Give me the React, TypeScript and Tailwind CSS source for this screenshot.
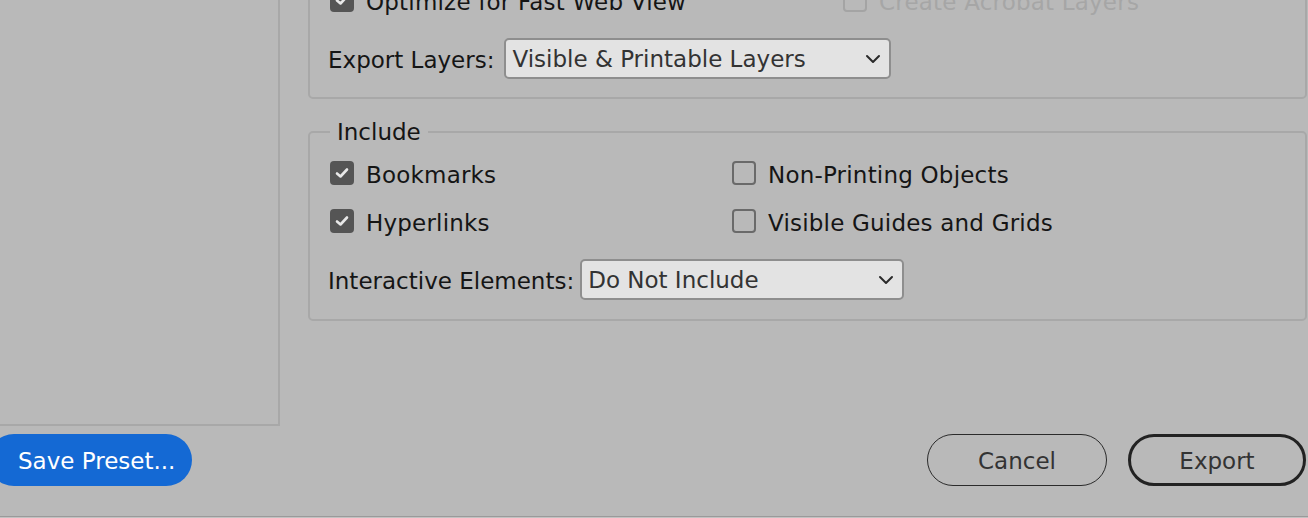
import React from "react";

const font = { fontFamily: '"DejaVu Sans", "Noto Sans", sans-serif' };

function Check({ checked, disabled }: { checked?: boolean; disabled?: boolean }) {
  if (checked) {
    return (
      <span className="flex h-[24px] w-[24px] shrink-0 items-center justify-center rounded-[4px] bg-[#555555]">
        <svg width="14" height="12" viewBox="0 0 14 12" fill="none">
          <path d="M2 6.5 L5.5 9.5 L12 2.5" stroke="#e8e8e8" strokeWidth="2.6" strokeLinecap="round" strokeLinejoin="round" />
        </svg>
      </span>
    );
  }
  return (
    <span
      className={
        "h-[24px] w-[24px] shrink-0 rounded-[4px] border-2 " +
        (disabled ? "border-[#a4a4a4]" : "border-[#6a6a6a]")
      }
    />
  );
}

function CheckRow({ label, checked, disabled }: { label: string; checked?: boolean; disabled?: boolean }) {
  return (
    <div className="flex h-[24px] items-center gap-[12px]">
      <Check checked={checked} disabled={disabled} />
      <span
        className={
          "translate-y-[2px] whitespace-nowrap leading-none tracking-[0.2px] " +
          (disabled ? "text-[#a6a6a6]" : "text-[#151515]")
        }
      >
        {label}
      </span>
    </div>
  );
}

function Select({ value, width }: { value: string; width: string }) {
  return (
    <div
      className={
        "flex h-[41px] items-center justify-between rounded-[5px] border-2 border-[#8e8e8e] bg-[#e3e3e3] pl-[6px] pr-[8px] " +
        width
      }
    >
      <span className="translate-y-[1px] whitespace-nowrap text-[#333333] leading-none">{value}</span>
      <svg width="16" height="10" viewBox="0 0 16 10" fill="none">
        <path d="M2 2 L8 8 L14 2" stroke="#2a2a2a" strokeWidth="2" strokeLinecap="round" strokeLinejoin="round" />
      </svg>
    </div>
  );
}

export default function App() {
  return (
    <div className="relative h-[518px] w-[1308px] overflow-hidden bg-[#b9b9b9] text-[23px]" style={font}>
      <div className="flex">
        <div className="h-[426px] w-[280px] shrink-0 border-b-2 border-r-2 border-[#a8a8a8]" />
        <div className="ml-[28px] w-[999px] shrink-0">
          <div className="-mt-[30px] rounded-[5px] border-2 border-[#a8a8a8] pb-[18px] pl-[20px] pt-[16px]">
            <div className="flex">
              <div className="w-[513px]">
                <CheckRow label="Optimize for Fast Web View" checked />
              </div>
              <CheckRow label="Create Acrobat Layers" disabled />
            </div>
            <div className="mt-[26px] flex items-center gap-[10px]">
              <span className="-ml-[2px] translate-y-[2px] whitespace-nowrap text-[#151515]">Export Layers:</span>
              <Select value="Visible & Printable Layers" width="w-[387px]" />
            </div>
          </div>

          <fieldset className="mt-[20px] rounded-[5px] border-2 border-[#a8a8a8] pb-[19px] pl-[20px] pt-[16px]">
            <legend className="px-[7px] leading-[26px] text-[#151515]">Include</legend>
            <div className="flex flex-col gap-[24px]">
              <div className="flex">
                <div className="w-[402px]">
                  <CheckRow label="Bookmarks" checked />
                </div>
                <CheckRow label="Non-Printing Objects" />
              </div>
              <div className="flex">
                <div className="w-[402px]">
                  <CheckRow label="Hyperlinks" checked />
                </div>
                <CheckRow label="Visible Guides and Grids" />
              </div>
            </div>
            <div className="mt-[26px] flex items-center gap-[6px]">
              <span className="-ml-[2px] translate-y-[2px] whitespace-nowrap text-[#151515]">Interactive Elements:</span>
              <Select value="Do Not Include" width="w-[324px]" />
            </div>
          </fieldset>
        </div>
      </div>

      <div className="mt-[8px] flex h-[52px] items-center">
        <button className="-ml-[12px] flex h-[52px] w-[204px] items-center rounded-full bg-[#1469d4] pl-[30px] pt-[3px] text-white">
          Save Preset...
        </button>
        <div className="ml-auto mr-[2px] flex gap-[21px]">
          <button className="h-[52px] w-[180px] rounded-full border-[1.5px] border-[#2b2b2b] pt-[3px] text-[#333333]">Cancel</button>
          <button className="h-[52px] w-[178px] rounded-full border-[3px] border-[#222222] pt-[3px] text-[#333333]">Export</button>
        </div>
      </div>

      <div className="absolute left-0 top-[516px] h-[2px] w-full border-t border-[#9a9a9a] bg-[#c2c2c2]" />
    </div>
  );
}
